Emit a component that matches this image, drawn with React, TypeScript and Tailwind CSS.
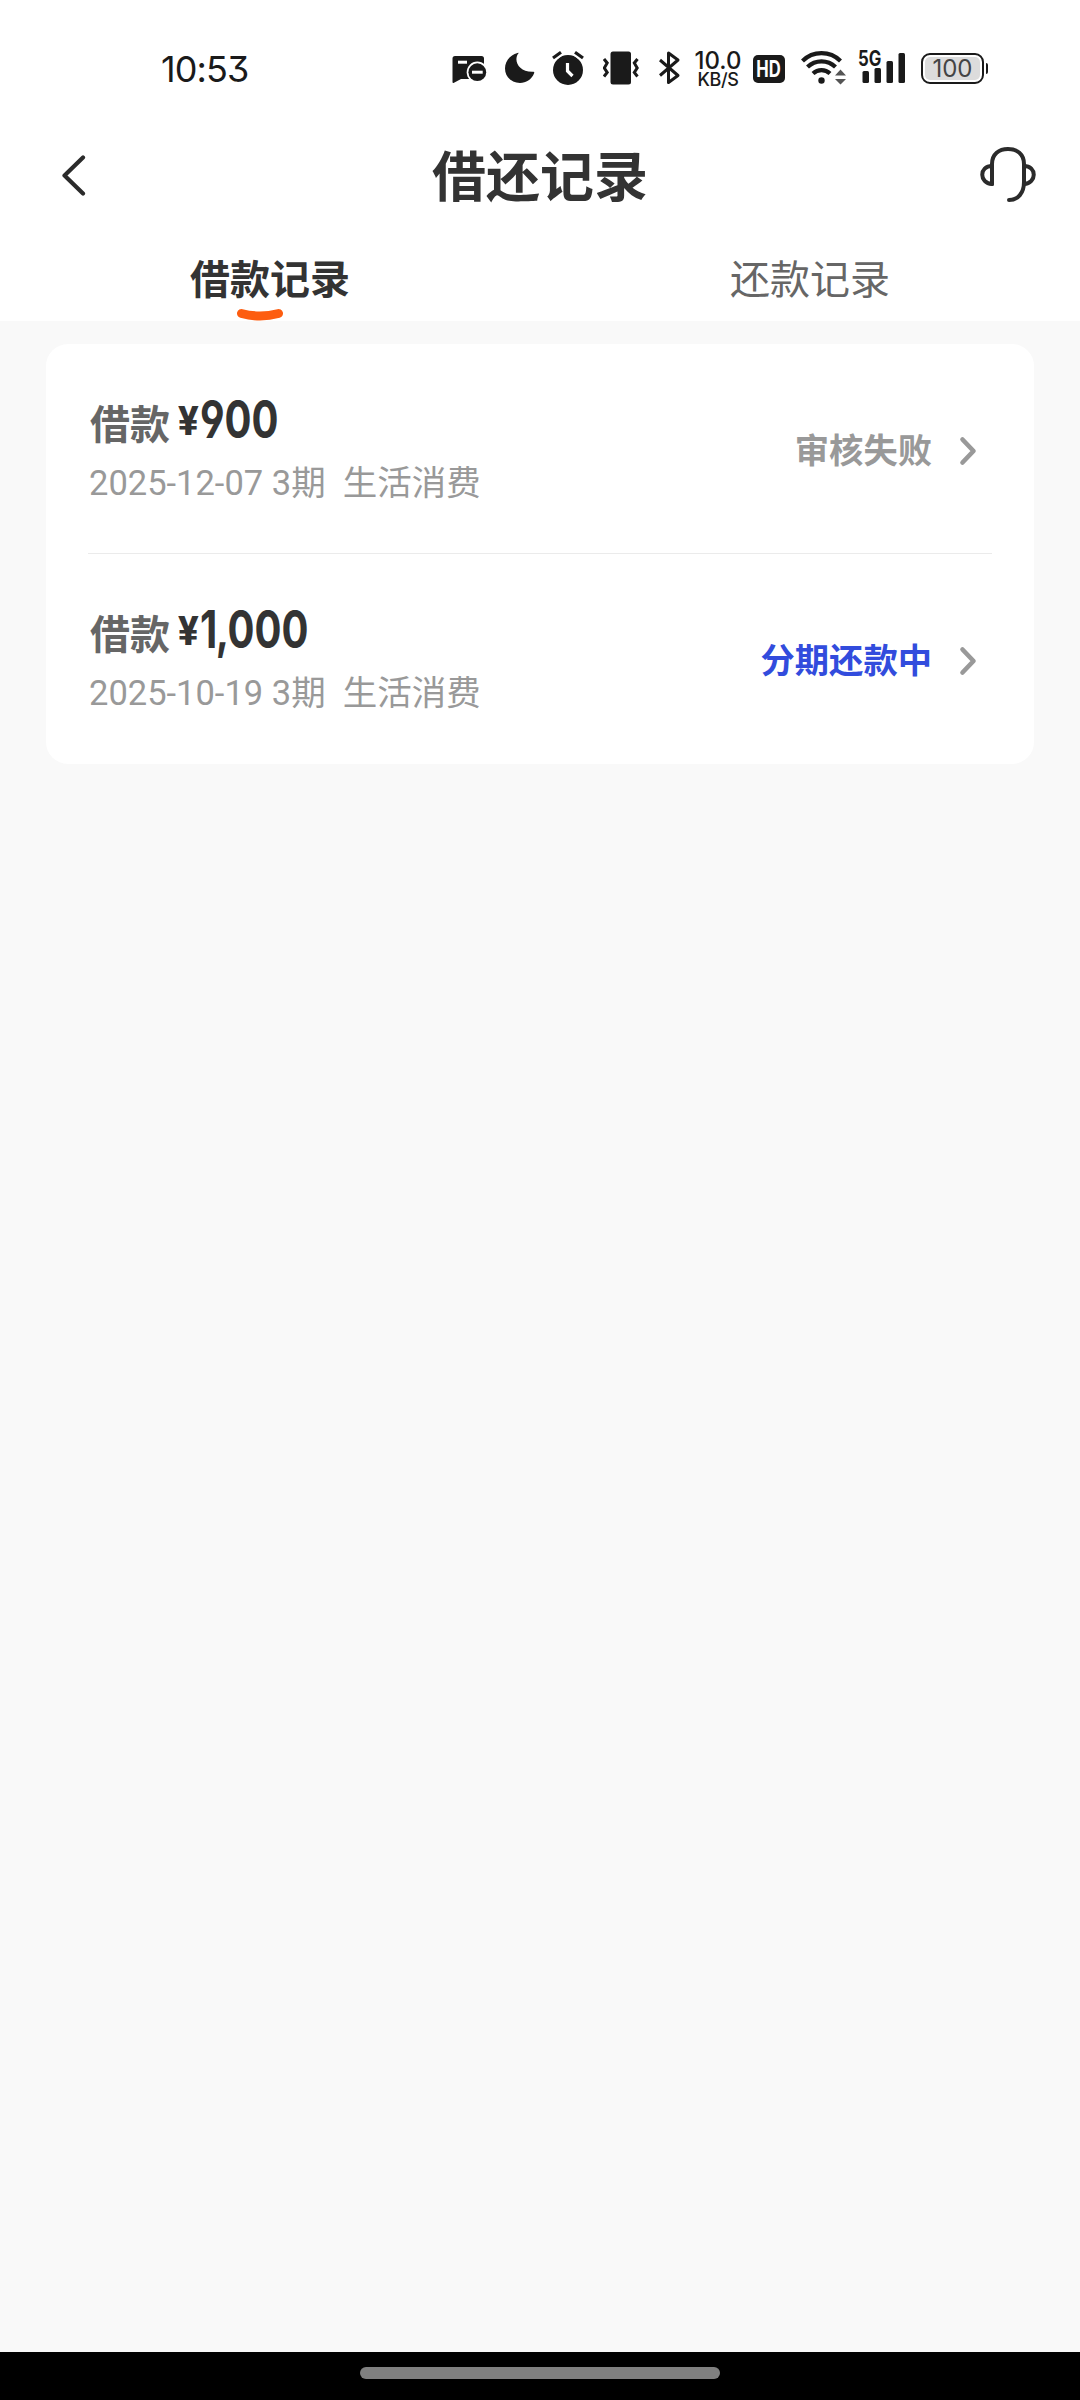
import { useState } from 'react';

interface LoanRecord {
    id: number;
    amount: string;
    date: string;
    periods: string;
    purpose: string;
    status: string;
    active: boolean;
}

const RECORDS: LoanRecord[] = [
    { id: 1, amount: '900', date: '2025-12-07', periods: '3期', purpose: '生活消费', status: '审核失败', active: false },
    { id: 2, amount: '1,000', date: '2025-10-19', periods: '3期', purpose: '生活消费', status: '分期还款中', active: true },
];

const TABS = ['借款记录', '还款记录'];

const StatusBar: React.FC = () => (
    <div className="flex h-[136px] items-start pl-[161px] pt-[48px] text-[#1a1a1a]">
        <div className="w-[291px] shrink-0 font-['Inter',sans-serif] text-[36px] leading-[42px] tracking-[-0.900px] [font-feature-settings:'cv09']">
            10:53
        </div>

        <svg className="h-10 w-[35px] shrink-0" viewBox="0 0 35 40" fill="currentColor">
            <path d="M3 8H29.500Q32 8 32 10.500V24L20 31H9L2 34.800Q.5 35.500.5 34V10.500Q.5 8 3 8Z" />
            <rect x="6" y="12.700" width="9" height="3" fill="white" />
            <circle cx="25.300" cy="24.200" r="10.600" fill="white" />
            <circle cx="25.300" cy="24.200" r="8.900" />
            <rect x="20" y="22.700" width="10.700" height="3" fill="white" />
        </svg>

        <svg className="ml-[18px] h-10 w-[30px] shrink-0" viewBox="0 0 30 40" fill="currentColor">
            <path d="M13.500 5.200C8 12 13.500 24.500 28.300 23.800Q29.800 23.700 29 25.500C26.500 31.500 21 35 15 35C7 35 0 29 0 20.500C0 13 5 7 12.500 4.900Q14 4.600 13.500 5.200Z" />
        </svg>

        <svg className="ml-[17px] h-10 w-[32px] shrink-0" viewBox="0 0 32 40" fill="none" stroke="currentColor">
            <circle cx="16" cy="22" r="15" fill="currentColor" stroke="none" />
            <path d="M.5 11L9 4.800M31.500 11L23 4.800" stroke="white" strokeWidth="6" />
            <path d="M1 10L9 4.300M31 10L23 4.300" strokeWidth="3.200" />
            <path d="M15.500 15V23L20.500 28" stroke="white" strokeWidth="3.200" />
        </svg>

        <svg className="ml-[19px] h-10 w-[36px] shrink-0" viewBox="0 0 36 40" fill="none" stroke="currentColor" strokeWidth="3">
            <rect x="7.500" y="3.500" width="20.500" height="33" rx="2.500" fill="currentColor" stroke="none" />
            <path d="M1 11L4.200 15L1.300 20L4.200 24.500L1 28.500M34.500 11L31.300 15L34.200 20L31.300 24.500L34.500 28.500" />
        </svg>

        <svg className="ml-[20px] h-10 w-[22px] shrink-0" viewBox="0 0 22 40" fill="none" stroke="currentColor" strokeWidth="3" strokeLinejoin="round">
            <path d="M1 12L19 27.500L9.500 34.500V5L19 12L1 27.500" />
        </svg>

        <div className="ml-[12px] flex w-[50px] shrink-0 flex-col items-center pt-[3px] font-['Inter',sans-serif]">
            <span className="text-[24px] font-medium leading-[20px]">10.0</span>
            <span className="text-[18px] font-medium leading-[18px] tracking-[-0.400px]">KB/S</span>
        </div>

        <div className="ml-[10px] mt-[7px] flex h-[28px] w-[32px] shrink-0 items-center justify-center rounded-[5px] bg-[#1a1a1a]">
            <span className="scale-x-[0.740] font-['Inter',sans-serif] text-[22.500px] font-bold leading-none text-white">HD</span>
        </div>

        <svg className="ml-[16px] h-10 w-[46px] shrink-0" viewBox="0 0 46 40" fill="none" stroke="currentColor" strokeWidth="4.200">
            <path d="M1.500 13A27 27 0 0 1 39.500 13M6.500 19A20 20 0 0 1 34.500 19M12 25.500A12.500 12.500 0 0 1 29 25.500" />
            <circle cx="20.500" cy="32.500" r="3.200" fill="currentColor" stroke="none" />
            <path d="M39.500 21.500L45 27.500H34ZM39.500 36.500L45 31H34Z" fill="#555555" stroke="none" />
        </svg>

        <div className="relative ml-[11px] h-10 w-[48px] shrink-0">
            <svg className="h-10 w-12" viewBox="0 0 48 40" fill="currentColor">
                <rect x="4.500" y="23" width="6.500" height="12" rx="1.500" />
                <rect x="16.500" y="20" width="6.500" height="15" rx="1.500" />
                <rect x="28.500" y="13" width="6.500" height="22" rx="1.500" />
                <rect x="40.500" y="5" width="6.500" height="30" rx="1.500" />
            </svg>
            <span className="absolute left-0 top-px origin-left scale-x-[0.800] font-['Inter',sans-serif] text-[21px] font-bold leading-[20px]">5G</span>
        </div>

        <div className="ml-[15px] mt-[5px] flex shrink-0 items-center gap-[2px]">
            <div className="h-[31px] w-[63px] rounded-[9px] border-2 border-[#1a1a1a] p-[2px]">
                <div className="flex h-full items-center justify-center rounded-[5px] bg-[#dcdcdc] pt-px font-['Inter',sans-serif] text-[24px] leading-none text-[#444444]">
                    100
                </div>
            </div>
            <div className="h-[11px] w-[2px] rounded-r bg-[#1a1a1a]" />
        </div>
    </div>
);

const Header: React.FC = () => (
    <div className="flex h-[80px] items-center pl-[61px] pr-[44px]">
        <svg className="h-[42px] w-[54px]" viewBox="0 0 54 42" fill="none" stroke="#2b2b2b" strokeWidth="4.200" strokeLinecap="round" strokeLinejoin="round">
            <path d="M22 2.500L3.500 20.500L22 38.500" />
        </svg>
        <h1 className="ml-[317px] pt-[5px] text-[54px] font-bold leading-[78px] text-[#333333]">借还记录</h1>
        <svg className="mb-[5px] ml-auto h-[56px] w-[56px]" viewBox="0 0 56 56" fill="none" stroke="#2b2b2b" strokeWidth="4" strokeLinecap="round" strokeLinejoin="round">
            <path d="M12 38V18C12 8 19 3 28 3S44 8 44 18V36C44 47 38 54 29 54" />
            <path d="M12 20C-1 20 -1 37 12 38M44 20C57 20 57 37 44 38" />
        </svg>
    </div>
);

const App: React.FC = () => {
    const [activeTab, setActiveTab] = useState<number>(0);

    return (
        <div className="flex h-[2400px] w-[1080px] flex-col bg-[#f9f9f9] font-['Roboto','Noto_Sans_CJK_SC',sans-serif]">
            <div className="h-[321px] bg-white">
                <StatusBar />
                <Header />
                <div className="flex h-[105px]">
                    {TABS.map((tab, index) => (
                        <button
                            key={tab}
                            onClick={() => setActiveTab(index)}
                            className={`relative flex w-1/2 justify-center pt-[36px] text-[40px] leading-[58px] ${index === activeTab ? 'font-bold text-[#333333]' : 'text-[#666666]'}`}
                        >
                            {tab}
                            {index === activeTab && (
                                <svg className="absolute bottom-0 left-[236px] h-[13px] w-[48px]" viewBox="0 0 48 13" fill="none">
                                    <path d="M5.500 5.500Q24 10.500 42.500 5.500" stroke="#fd5d10" strokeWidth="9" strokeLinecap="round" />
                                </svg>
                            )}
                        </button>
                    ))}
                </div>
            </div>

            <div className="mx-[46px] mt-[23px] h-[420px] rounded-[22px] bg-white px-[42px]">
                {RECORDS.map((record) => (
                    <div key={record.id} className="flex h-[210px] justify-between border-b border-[#ebebeb] last:border-b-0">
                        <div className="pl-px pt-[48px]">
                            <div className="flex h-[64px] items-start">
                                <span className="ml-px mr-[8px] mt-[5px] text-[40px] font-bold leading-[58px] text-[#666666]">借款</span>
                                <span className="w-[22px] origin-left scale-x-[0.960] text-[40px] font-extrabold leading-[60px] text-[#333333]">¥</span>
                                <span className="origin-left scale-x-[0.770] font-['Inter',sans-serif] text-[52px] font-bold leading-[56px] text-[#333333] [font-feature-settings:'cv04']">
                                    {record.amount.split(',').map((part, index) => (
                                        <span key={index}>
                                            {index > 0 && <span className="-ml-[2px] -mr-[2px]">,</span>}
                                            {part}
                                        </span>
                                    ))}
                                </span>
                            </div>
                            <div className="mt-[2px] whitespace-pre text-[34.500px] leading-[50px] text-[#999999]">
                                {record.date} {record.periods}  {record.purpose}
                            </div>
                        </div>
                        <div className="flex h-[213px] items-center pr-[15px]">
                            <span className={`text-[34.300px] font-bold leading-[50px] ${record.active ? 'text-[#324cdd]' : 'text-[#999999]'}`}>
                                {record.status}
                            </span>
                            <svg className="ml-[27px] h-[30px] w-[18px]" viewBox="0 0 18 30" fill="none" stroke="#999999" strokeWidth="4.600" strokeLinejoin="round" strokeLinecap="round">
                                <path d="M3.500 3.500L14.500 15L3.500 26.500" />
                            </svg>
                        </div>
                    </div>
                ))}
            </div>

            <div className="mt-auto flex h-12 justify-center bg-black pt-[15px]">
                <div className="h-3 w-[360px] rounded-full bg-[#808080]" />
            </div>
        </div>
    );
};

export default App;
